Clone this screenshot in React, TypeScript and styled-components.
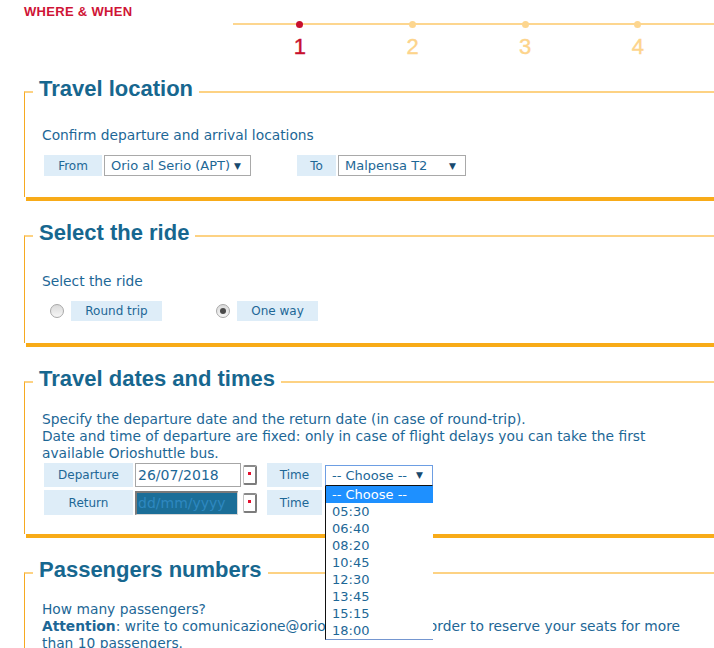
import styled, { createGlobalStyle, css } from "styled-components";

const GlobalStyle = createGlobalStyle`
body {
  margin: 0;
  background: #fff;
  font-family: "DejaVu Sans", Verdana, sans-serif;
  color: #1d6796;
  overflow: hidden;
}
`;

const Page = styled.div`
padding-left: 24px;
`;

const Header = styled.div`
display: flex;
height: 76px;
`;

const Brand = styled.div`
width: 209px;
padding-top: 4px;
font: bold 13px/15px "Liberation Sans", Arial, sans-serif;
letter-spacing: 0.3px;
color: #cf1436;
`;

const Steps = styled.div`
flex: 1;
display: flex;
align-self: flex-start;
margin-top: 23px;
padding-left: 10.5px;
border-top: 2px solid #fdd68f;
`;

const Step = styled.div`
width: 112.7px;
display: flex;
flex-direction: column;
align-items: center;
`;

const Dot = styled.span<{ $active?: boolean }>`
width: 7px;
height: 7px;
margin-top: -4.5px;
border-radius: 50%;
background: ${(p) => (p.$active ? "#c8102e" : "#fdd68f")};
`;

const StepNum = styled.span<{ $active?: boolean }>`
margin-top: 6px;
font: 22px/25px "Liberation Sans", Arial, sans-serif;
-webkit-text-stroke: 0.4px currentColor;
color: ${(p) => (p.$active ? "#c8102e" : "#fdd48b")};
`;

const Box = styled.fieldset<{ $bottom: number }>`
margin: 0 0 23px;
padding: 0 10px ${(p) => p.$bottom}px 17px;
min-width: 0;
border: none;
border-top: 2px solid #fdd283;
border-left: 1px solid #f6a920;
box-shadow: 2px 4px 0 #f8ab18;
`;

const Legend = styled.legend`
margin-left: -9px;
padding: 0 6px 6px;
font: bold 22px/26px "Liberation Sans", Arial, sans-serif;
color: #17678f;
`;

const Intro = styled.p<{ $top: number }>`
margin: ${(p) => p.$top}px 0 0;
font-size: 13.8px;
line-height: 17px;
`;

const Row = styled.div<{ $top: number; $gap: number; $indent?: number }>`
display: flex;
align-items: center;
gap: ${(p) => p.$gap}px;
margin-top: ${(p) => p.$top}px;
padding-left: ${(p) => p.$indent ?? 0}px;
`;

const Field = styled.div<{ $gap: number }>`
display: flex;
align-items: center;
gap: ${(p) => p.$gap}px;
`;

const Cell = styled.div<{ $w: number; $h: number }>`
width: ${(p) => p.$w}px;
height: ${(p) => p.$h}px;
display: flex;
align-items: center;
justify-content: center;
background: #deedf8;
font-size: 12px;
`;

const Select = styled.div<{ $w: number; $focus?: boolean }>`
box-sizing: border-box;
width: ${(p) => p.$w}px;
height: 21px;
display: flex;
align-items: center;
justify-content: space-between;
padding: 0 9px 0 6px;
border: 1px solid #a9a9a9;
background: #fff;
font-size: 13px;
${(p) =>
  p.$focus &&
  css`
    border-color: #6d9ee3;
    border-bottom-color: #111;
  `}
`;

const Arrow = styled.span`
font-size: 9px;
color: #17496e;
`;

const Stack = styled.div`
display: flex;
flex-direction: column;
gap: 3px;
margin-top: 1.5px;
`;

const DateInput = styled.input<{ $empty?: boolean }>`
box-sizing: border-box;
width: 106px;
height: 24px;
margin: 0;
padding: 0 2px;
border: 1px solid #a6a6a6;
outline: none;
background: #fff;
font: 14px "DejaVu Sans", Verdana, sans-serif;
color: #1d6796;
${(p) =>
  p.$empty &&
  css`
    width: 103px;
    margin-right: 3px;
    padding: 0 1px;
    border-width: 2px 1px 1px 2px;
    border-color: #7a7a7a #d6d6d6 #d6d6d6 #7a7a7a;
    background: #1b6e98;
    &::placeholder {
      color: #2e88c0;
      opacity: 1;
    }
  `}
`;

const CalButton = styled.span`
position: relative;
box-sizing: border-box;
width: 14px;
height: 20px;
border: 1px solid #c4c4c4;
border-top: 2px solid #8a8a8a;
border-right: 2px solid #7c7c7c;
border-bottom: 2px solid #7c7c7c;
border-radius: 2px;
background: #fff;
&::after {
  content: "";
  position: absolute;
  left: 4px;
  top: 5px;
  width: 3px;
  height: 3px;
  background: #e3102e;
}
`;

const TimeWrap = styled.div`
position: relative;
`;

const List = styled.ul`
position: absolute;
top: 100%;
left: 0;
z-index: 5;
box-sizing: border-box;
width: 108px;
margin: 0;
padding: 0;
list-style: none;
background: #fff;
border-left: 1px solid #111;
border-bottom: 1px solid #7496d0;
font-size: 13px;
`;

const Option = styled.li<{ $selected?: boolean }>`
height: 17px;
line-height: 17px;
padding-left: 6px;
background: ${(p) => (p.$selected ? "#1e90ff" : "#fff")};
color: ${(p) => (p.$selected ? "#fff" : "#1d6796")};
`;

const RadioItem = styled.label`
width: 166px;
display: flex;
align-items: center;
gap: 7px;
`;

const Radio = styled.span<{ $on?: boolean }>`
position: relative;
box-sizing: border-box;
width: 14px;
height: 14px;
border-radius: 50%;
border: 1px solid #a8a8a8;
background: linear-gradient(#dadada, #f6f6f6);
${(p) =>
  p.$on &&
  css`
    &::after {
      content: "";
      position: absolute;
      inset: 3px;
      border-radius: 50%;
      background: #4a4a4a;
    }
  `}
`;

const times = ["05:30", "06:40", "08:20", "10:45", "12:30", "13:45", "15:15", "18:00"];

export default function App() {
  return (
    <>
      <GlobalStyle />
      <Page>
        <Header>
          <Brand>WHERE &amp; WHEN</Brand>
          <Steps>
            {[1, 2, 3, 4].map((n) => (
              <Step key={n}>
                <Dot $active={n === 1} />
                <StepNum $active={n === 1}>{n}</StepNum>
              </Step>
            ))}
          </Steps>
        </Header>

        <Box $bottom={21}>
          <Legend>Travel location</Legend>
          <Intro $top={18.5}>Confirm departure and arrival locations</Intro>
          <Row $top={11.5} $gap={46} $indent={2}>
            <Field $gap={2}>
              <Cell $w={58} $h={21}>From</Cell>
              <Select $w={147}>
                Orio al Serio (APT) <Arrow>▼</Arrow>
              </Select>
            </Field>
            <Field $gap={2}>
              <Cell $w={39} $h={21}>To</Cell>
              <Select $w={128}>
                Malpensa T2 <Arrow>▼</Arrow>
              </Select>
            </Field>
          </Row>
        </Box>

        <Box $bottom={22}>
          <Legend>Select the ride</Legend>
          <Intro $top={20.5}>Select the ride</Intro>
          <Row $top={11.5} $gap={0} $indent={8}>
            <RadioItem>
              <Radio />
              <Cell $w={91} $h={20}>Round trip</Cell>
            </RadioItem>
            <RadioItem>
              <Radio $on />
              <Cell $w={81} $h={20}>One way</Cell>
            </RadioItem>
          </Row>
        </Box>

        <Box $bottom={19}>
          <Legend>Travel dates and times</Legend>
          <Intro $top={12.5}>
            Specify the departure date and the return date (in case of round-trip).
            <br />
            Date and time of departure are fixed: only in case of flight delays you can take the first
            <br />
            available Orioshuttle bus.
          </Intro>
          <Stack>
            <Row $top={0} $gap={10} $indent={2}>
              <Field $gap={2}>
                <Cell $w={89} $h={24}>Departure</Cell>
                <DateInput readOnly value="26/07/2018" />
                <CalButton />
              </Field>
              <Field $gap={3}>
                <Cell $w={55} $h={24}>Time</Cell>
                <TimeWrap>
                  <Select $w={108} $focus>
                    -- Choose -- <Arrow>▼</Arrow>
                  </Select>
                  <List>
                    <Option $selected>-- Choose --</Option>
                    {times.map((t) => (
                      <Option key={t}>{t}</Option>
                    ))}
                  </List>
                </TimeWrap>
              </Field>
            </Row>
            <Row $top={0} $gap={10} $indent={2}>
              <Field $gap={2}>
                <Cell $w={89} $h={25}>Return</Cell>
                <DateInput $empty readOnly placeholder="dd/mm/yyyy" />
                <CalButton />
              </Field>
              <Field $gap={3}>
                <Cell $w={55} $h={25}>Time</Cell>
                <Select $w={108}>
                  -- Choose -- <Arrow>▼</Arrow>
                </Select>
              </Field>
            </Row>
          </Stack>
        </Box>

        <Box $bottom={20}>
          <Legend>Passengers numbers</Legend>
          <Intro $top={11.5}>
            How many passengers?
            <br />
            <b>Attention</b>: write to comunicazione@orioshuttle.com in order to reserve your seats for more
            than 10 passengers.
          </Intro>
        </Box>
      </Page>
    </>
  );
}
